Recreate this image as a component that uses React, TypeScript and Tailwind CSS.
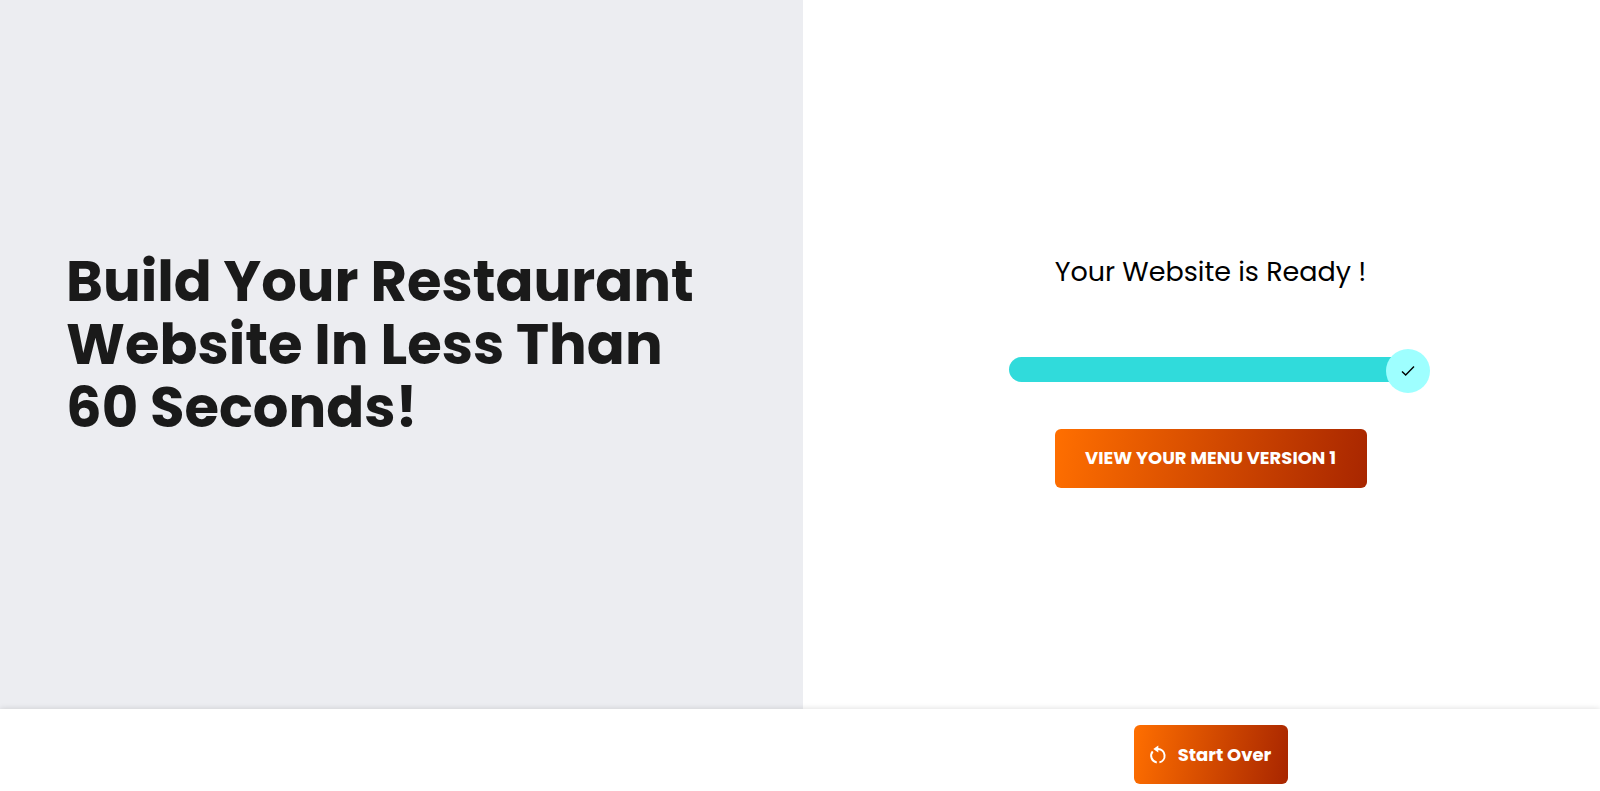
import type { ReactNode } from 'react';

function CheckIcon() {
  return (
    <svg viewBox="0 0 16 16" className="size-4" fill="none" stroke="currentColor" aria-hidden="true">
      <path d="M2 8.4 5.7 12 14 3.6" strokeWidth="1.4" />
    </svg>
  );
}

function RestartIcon() {
  return (
    <svg viewBox="0 0 24 24" className="size-6" fill="none" stroke="currentColor" strokeWidth="2" aria-hidden="true">
      <path d="M11 6h1a6.800 6.800 0 0 1 1.400 13.400" />
      <path d="M10.800 19.400A6.800 6.800 0 0 1 6.700 8.400" />
      <path d="M12.300 2.400v7.200L7.300 6z" fill="currentColor" stroke="none" />
    </svg>
  );
}

function GradientButton({ children, className }: { children: ReactNode; className: string }) {
  return (
    <button
      type="button"
      className={`flex h-[59px] items-center justify-center rounded-md bg-[linear-gradient(100deg,#ff6f00_0%,#a82600_100%)] text-lg font-bold whitespace-nowrap text-white ${className}`}
    >
      {children}
    </button>
  );
}

function ProgressBar({ value }: { value: number }) {
  return (
    <div
      role="progressbar"
      aria-label="Website progress"
      aria-valuenow={value}
      aria-valuemin={0}
      aria-valuemax={100}
      className="relative h-[25px] w-full max-w-[404px] rounded-full"
    >
      <div className="h-full rounded-full bg-[#30dbdb]" style={{ width: `${value}%` }} />
      <span className="absolute -top-2 -right-[17px] flex size-11 items-center justify-center rounded-full bg-[#9effff] text-black">
        <CheckIcon />
      </span>
    </div>
  );
}

export default function App() {
  return (
    <div className="flex min-h-screen flex-col bg-white font-['Poppins','Inter',sans-serif]">
      <main className="grid flex-1 grid-cols-[803fr_797fr]">
        <section className="flex items-center bg-[#ecedf1] px-[66px] pb-5">
          <h1 className="text-[56px] leading-[63px] font-bold text-[#1a1a1a]">
            Build Your Restaurant
            <br />
            Website In Less Than
            <br />
            60 Seconds!
          </h1>
        </section>

        <section className="flex flex-col items-center justify-center pt-[30px] pl-[18px]">
          <h2 className="text-[27px] leading-10 text-black">Your Website is Ready !</h2>
          <div className="mt-[65px] mb-[47px] flex w-full justify-center">
            <ProgressBar value={100} />
          </div>
          <GradientButton className="w-[312px]">VIEW YOUR MENU VERSION 1</GradientButton>
        </section>
      </main>

      <footer className="relative grid grid-cols-[803fr_797fr] bg-white pt-4 pb-[7px] shadow-[0_0_6px_rgba(0,0,0,0.15)]">
        <div className="col-start-2 flex justify-center pl-[18px]">
          <GradientButton className="w-[154px] gap-2 pr-1">
            <RestartIcon />
            Start Over
          </GradientButton>
        </div>
      </footer>
    </div>
  );
}
